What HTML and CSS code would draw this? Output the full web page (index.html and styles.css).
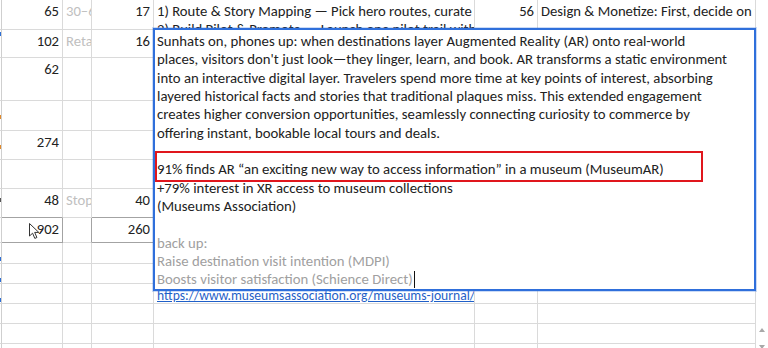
FILE: index.html
```html
<!DOCTYPE html>
<html lang="en">
<head>
    <meta charset="UTF-8">
    <meta name="viewport" content="width=device-width, initial-scale=1.0">
    <title>Sheet - AR pitch notes</title>
    <link rel="stylesheet" href="styles.css">
</head>
<body>
    <div class="sheet">
        <div class="grid">
            <!-- row 1 -->
            <div class="c z"></div>
            <div class="c num">65</div>
            <div class="c dim">30–60 min</div>
            <div class="c num">17</div>
            <div class="c">1) Route &amp; Story Mapping — Pick hero routes, curate stories<br>2) Build Pilot &amp; Promote — Launch one pilot trail with partners</div>
            <div class="c num">56</div>
            <div class="c">Design &amp; Monetize: First, decide on the experience</div>
            <div class="sb"></div>
            <!-- row 2 -->
            <div class="c z"><span class="mark blue"></span></div>
            <div class="c num">102</div>
            <div class="c dim">Retail</div>
            <div class="c num">16</div>
            <div class="c"></div><div class="c"></div><div class="c"></div>
            <div class="sb"></div>
            <!-- row 3 -->
            <div class="c z"></div>
            <div class="c num">62</div>
            <div class="c"></div>
            <div class="c"></div>
            <div class="c"></div><div class="c"></div><div class="c"></div>
            <div class="sb"></div>
            <!-- row 4 -->
            <div class="c z"><span class="mark low orange"></span></div>
            <div class="c"></div>
            <div class="c"></div>
            <div class="c"></div>
            <div class="c"></div><div class="c"></div><div class="c"></div>
            <div class="sb"></div>
            <!-- row 5 -->
            <div class="c z"><span class="mark low orange"></span></div>
            <div class="c num">274</div>
            <div class="c"></div>
            <div class="c"></div>
            <div class="c"></div><div class="c"></div><div class="c"></div>
            <div class="sb"></div>
            <!-- row 6 -->
            <div class="c z"></div>
            <div class="c"></div>
            <div class="c"></div>
            <div class="c"></div>
            <div class="c"></div><div class="c"></div><div class="c"></div>
            <div class="sb"></div>
            <!-- row 7 -->
            <div class="c z"><span class="mark dark"></span></div>
            <div class="c num box-top">48</div>
            <div class="c dim">Stops</div>
            <div class="c num box-top">40</div>
            <div class="c"></div><div class="c"></div><div class="c"></div>
            <div class="sb"></div>
            <!-- row 8 -->
            <div class="c z box-left"></div>
            <div class="c num boxed">902</div>
            <div class="c box-left"></div>
            <div class="c num boxed">260</div>
            <div class="c"></div><div class="c"></div><div class="c"></div>
            <div class="sb"></div>
            <!-- row 9 -->
            <div class="c z"><span class="mark low blue"></span></div>
            <div class="c"></div>
            <div class="c"></div>
            <div class="c"></div>
            <div class="c"></div><div class="c"></div><div class="c"></div>
            <div class="sb"></div>
            <!-- row 10 -->
            <div class="c z"><span class="mark low blue"></span></div>
            <div class="c"></div>
            <div class="c"></div>
            <div class="c"></div>
            <div class="c"></div><div class="c"></div><div class="c"></div>
            <div class="sb"></div>
            <!-- row 11 -->
            <div class="c z"><span class="mark low blue"></span></div>
            <div class="c"></div>
            <div class="c"></div>
            <div class="c"></div>
            <div class="c"><a class="link" href="#">https://www.museumsassociation.org/museums-journal/news/2023/</a></div>
            <div class="c"></div><div class="c"></div>
            <div class="sb"></div>
            <!-- row 12 -->
            <div class="c z"></div>
            <div class="c"></div>
            <div class="c"></div>
            <div class="c"></div>
            <div class="c"></div><div class="c"></div><div class="c"></div>
            <div class="sb"></div>
            <!-- row 13 -->
            <div class="c z"></div>
            <div class="c"></div>
            <div class="c"></div>
            <div class="c"></div>
            <div class="c"></div><div class="c"></div><div class="c"></div>
            <div class="sb"><span class="spin up"></span></div>
            <!-- row 14 -->
            <div class="c z"></div>
            <div class="c"></div>
            <div class="c"></div>
            <div class="c"></div>
            <div class="c"></div><div class="c"></div><div class="c"></div>
            <div class="sb"><span class="spin down"></span></div>
        </div>

        <div class="editor">
            <p>Sunhats on, phones up: when destinations layer Augmented Reality (AR) onto real-world</p>
            <p>places, visitors don't just look—they linger, learn, and book. AR transforms a static environment</p>
            <p>into an interactive digital layer. Travelers spend more time at key points of interest, absorbing</p>
            <p>layered historical facts and stories that traditional plaques miss. This extended engagement</p>
            <p>creates higher conversion opportunities, seamlessly connecting curiosity to commerce by</p>
            <p>offering instant, bookable local tours and deals.</p>
            <p class="gap"></p>
            <p class="hl">91% finds AR “an exciting new way to access information” in a museum (MuseumAR)</p>
            <p>+79% interest in XR access to museum collections</p>
            <p>(Museums Association)</p>
            <p class="gap"></p>
            <p class="note">back up:</p>
            <p class="note">Raise destination visit intention (MDPI)</p>
            <p class="note">Boosts visitor satisfaction (Schience Direct)<span class="caret"></span></p>
        </div>

        <svg class="pointer" width="12" height="17" viewBox="0 0 12 17">
            <path d="M0.5 0.5 L0.5 13 L3.6 10.2 L5.8 15.4 L7.9 14.5 L5.7 9.4 L9.8 9.4 Z" fill="#fff" stroke="#333" stroke-width="1"/>
        </svg>
    </div>
</body>
</html>
```

FILE: styles.css
```css
* {
    box-sizing: border-box;
}
body {
    margin: 0;
    font-family: Carlito, Calibri, Lato, sans-serif;
    font-size: 14.67px;
    color: #222;
    background-color: #fff;
    overflow: hidden;
}
.sheet {
    position: relative;
    width: 768px;
    height: 348px;
    overflow: hidden;
}
.grid {
    display: grid;
    grid-template-columns: 2px 61px 29px 62px 321px 63px 218px 12px;
    grid-template-rows: 30px 28px 43px 30px 29px 29px 29px 25px 21px 20px 20px 20px 20px 20px;
}
.c {
    border-right: 1px solid #dadada;
    border-bottom: 1px solid #dadada;
    padding: 2px 3px 0;
    line-height: 18px;
    white-space: nowrap;
    overflow: hidden;
}
.c.z {
    padding: 0;
    border-right-color: #cfcfcf;
}
.num {
    text-align: right;
}
.dim {
    color: #c0c0c0;
}
.box-top {
    border-bottom-color: #a3a3a3;
}
.boxed {
    border-right-color: #a3a3a3;
    border-bottom-color: #a3a3a3;
}
.box-left {
    border-right-color: #a3a3a3;
}
.mark {
    display: block;
    width: 1px;
    height: 4px;
    margin-top: 2px;
}
.mark.low {
    margin-top: 14px;
}
.mark.blue {
    background-color: #2d6fd6;
}
.mark.orange {
    background-color: #e08a2c;
}
.mark.dark {
    margin-top: 9px;
    background-color: #555;
}
.link {
    color: #1f5fc8;
    font-size: 13.6px;
    text-decoration: underline;
}
.sb {
    background-color: #fff;
}
.spin {
    display: block;
    width: 0;
    height: 0;
    margin: 4px auto 0;
    border-left: 3px solid transparent;
    border-right: 3px solid transparent;
}
.spin.up {
    border-bottom: 4px solid #a8a8a8;
}
.spin.down {
    margin-top: 1px;
    border-top: 4px solid #a8a8a8;
}

/* cell being edited, spills over the neighbours */
.editor {
    position: absolute;
    left: 153px;
    top: 28px;
    width: 603px;
    height: 263px;
    border: 2px solid #2f6fdb;
    box-shadow: 0 0 0 1px rgba(47, 111, 219, 0.25);
    background-color: #fff;
    padding: 2px 2px 0;
    font-size: 14.75px;
    line-height: 18.33px;
}
.editor p {
    margin: 0;
    white-space: nowrap;
}
.editor .gap {
    height: 18.33px;
}
.editor .hl {
    position: relative;
}
.editor .hl::after {
    content: "";
    position: absolute;
    left: -2px;
    top: -9px;
    bottom: -3px;
    width: 544px;
    border: 2px solid #e0161d;
}
.editor .note {
    color: #a0a0a0;
}
.caret {
    display: inline-block;
    width: 1px;
    height: 17px;
    margin-left: 1px;
    background-color: #111;
    vertical-align: -4px;
}
.pointer {
    position: absolute;
    left: 29px;
    top: 223px;
}
```
